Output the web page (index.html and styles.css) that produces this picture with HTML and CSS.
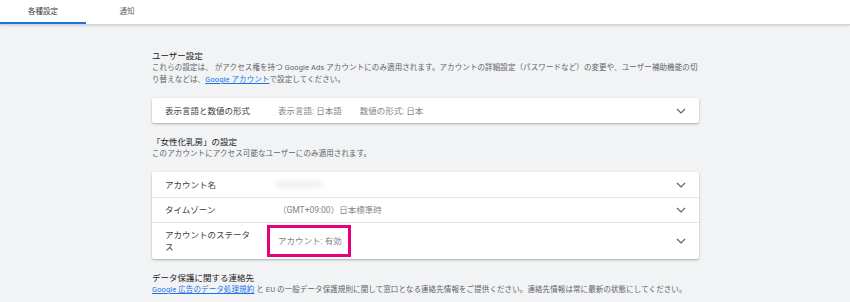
FILE: index.html
```html
<!DOCTYPE html>
<html lang="ja">
<head>
<meta charset="utf-8">
<link rel="stylesheet" href="styles.css">
</head>
<body>
<div class="tabbar">
  <div class="tab active">各種設定</div>
  <div class="tab">通知</div>
</div>
<main class="main">
  <section class="section">
    <h2 class="title">ユーザー設定</h2>
    <p class="desc">これらの設定は、 がアクセス権を持つ Google Ads アカウントにのみ適用されます。アカウントの詳細設定（パスワードなど）の変更や、ユーザー補助機能の切<br>り替えなどは、<a class="link" href="#">Google アカウント</a>で設定してください。</p>
    <div class="card">
      <div class="row">
        <div class="label">表示言語と数値の形式</div>
        <div class="value"><span>表示言語: 日本語</span><span>数値の形式: 日本</span></div>
        <svg class="chev" width="10" height="6" viewBox="0 0 10 6"><path d="M1 1 L5 5 L9 1" fill="none" stroke="#5f6368" stroke-width="1.2"/></svg>
      </div>
    </div>
  </section>
  <section class="section">
    <h2 class="title">「女性化乳房」の設定</h2>
    <p class="desc">このアカウントにアクセス可能なユーザーにのみ適用されます。</p>
    <div class="card">
      <div class="row">
        <div class="label">アカウント名</div>
        <div class="value"><span class="blur"></span></div>
        <svg class="chev" width="10" height="6" viewBox="0 0 10 6"><path d="M1 1 L5 5 L9 1" fill="none" stroke="#5f6368" stroke-width="1.2"/></svg>
      </div>
      <div class="row">
        <div class="label">タイムゾーン</div>
        <div class="value">（GMT+09:00）日本標準時</div>
        <svg class="chev" width="10" height="6" viewBox="0 0 10 6"><path d="M1 1 L5 5 L9 1" fill="none" stroke="#5f6368" stroke-width="1.2"/></svg>
      </div>
      <div class="row tall">
        <div class="label">アカウントのステータス</div>
        <div class="value"><span class="highlight">アカウント: 有効</span></div>
        <svg class="chev" width="10" height="6" viewBox="0 0 10 6"><path d="M1 1 L5 5 L9 1" fill="none" stroke="#5f6368" stroke-width="1.2"/></svg>
      </div>
    </div>
  </section>
  <section class="section">
    <h2 class="title">データ保護に関する連絡先</h2>
    <p class="desc"><a class="link" href="#">Google 広告のデータ処理規約</a> と EU の一般データ保護規則に関して窓口となる連絡先情報をご提供ください。連絡先情報は常に最新の状態にしてください。</p>
  </section>
</main>
</body>
</html>
```

FILE: styles.css
```css
* { box-sizing: border-box; }
html, body {
  margin: 0;
  padding: 0;
  background: #f1f3f4;
  font-family: Roboto, "Noto Sans CJK JP", sans-serif;
  color: #202124;
  overflow: hidden;
}
.tabbar {
  display: flex;
  height: 25px;
  background: #fff;
  border-bottom: 1px solid #d0d2d5;
  box-shadow: 0 1px 2px rgba(60, 64, 67, 0.15);
}
.tab {
  height: 24px;
  line-height: 24px;
  font-size: 7.5px;
  color: #5f6368;
  text-align: center;
}
.tab:first-child {
  width: 86px;
}
.tab:nth-child(2) {
  width: 82px;
}
.tab.active {
  color: #3c4043;
  border-bottom: 2px solid #1a73e8;
}
.main {
  width: 548px;
  margin: 0 auto;
  padding-top: 25px;
  padding-left: 1px;
}
.section {
  margin-bottom: 13px;
}
.title {
  margin: 0;
  font-size: 8.5px;
  font-weight: 400;
  line-height: 12px;
  color: #202124;
}
.desc {
  margin: 0;
  font-size: 7.5px;
  line-height: 12px;
  letter-spacing: 0.1px;
  color: #5f6368;
}
.link {
  color: #1a73e8;
  text-decoration: underline;
}
.card {
  margin-top: 12px;
  background: #fff;
  border-radius: 2px;
  box-shadow: 0 1px 2px rgba(60, 64, 67, 0.3), 0 1px 3px rgba(60, 64, 67, 0.1);
}
.row {
  display: flex;
  align-items: center;
  min-height: 25px;
  padding: 0 13px;
  font-size: 8.5px;
  line-height: 12px;
}
.row + .row {
  border-top: 1px solid #e3e4e6;
}
.row.tall {
  padding-top: 2px;
  padding-bottom: 2px;
}
.label {
  width: 90px;
  margin-right: 23px;
  color: #3c4043;
}
.value {
  flex: 1;
  display: flex;
  gap: 18px;
  color: #80868b;
}
.chev {
  flex: none;
}
.blur {
  display: block;
  width: 46px;
  height: 7px;
  background: #eef0f1;
  filter: blur(2px);
  margin-left: -2px;
}
.highlight {
  display: flex;
  align-items: center;
  height: 32px;
  width: 84px;
  margin-left: -11px;
  padding-left: 8px;
  border: 3px solid #e6007e;
}
```
